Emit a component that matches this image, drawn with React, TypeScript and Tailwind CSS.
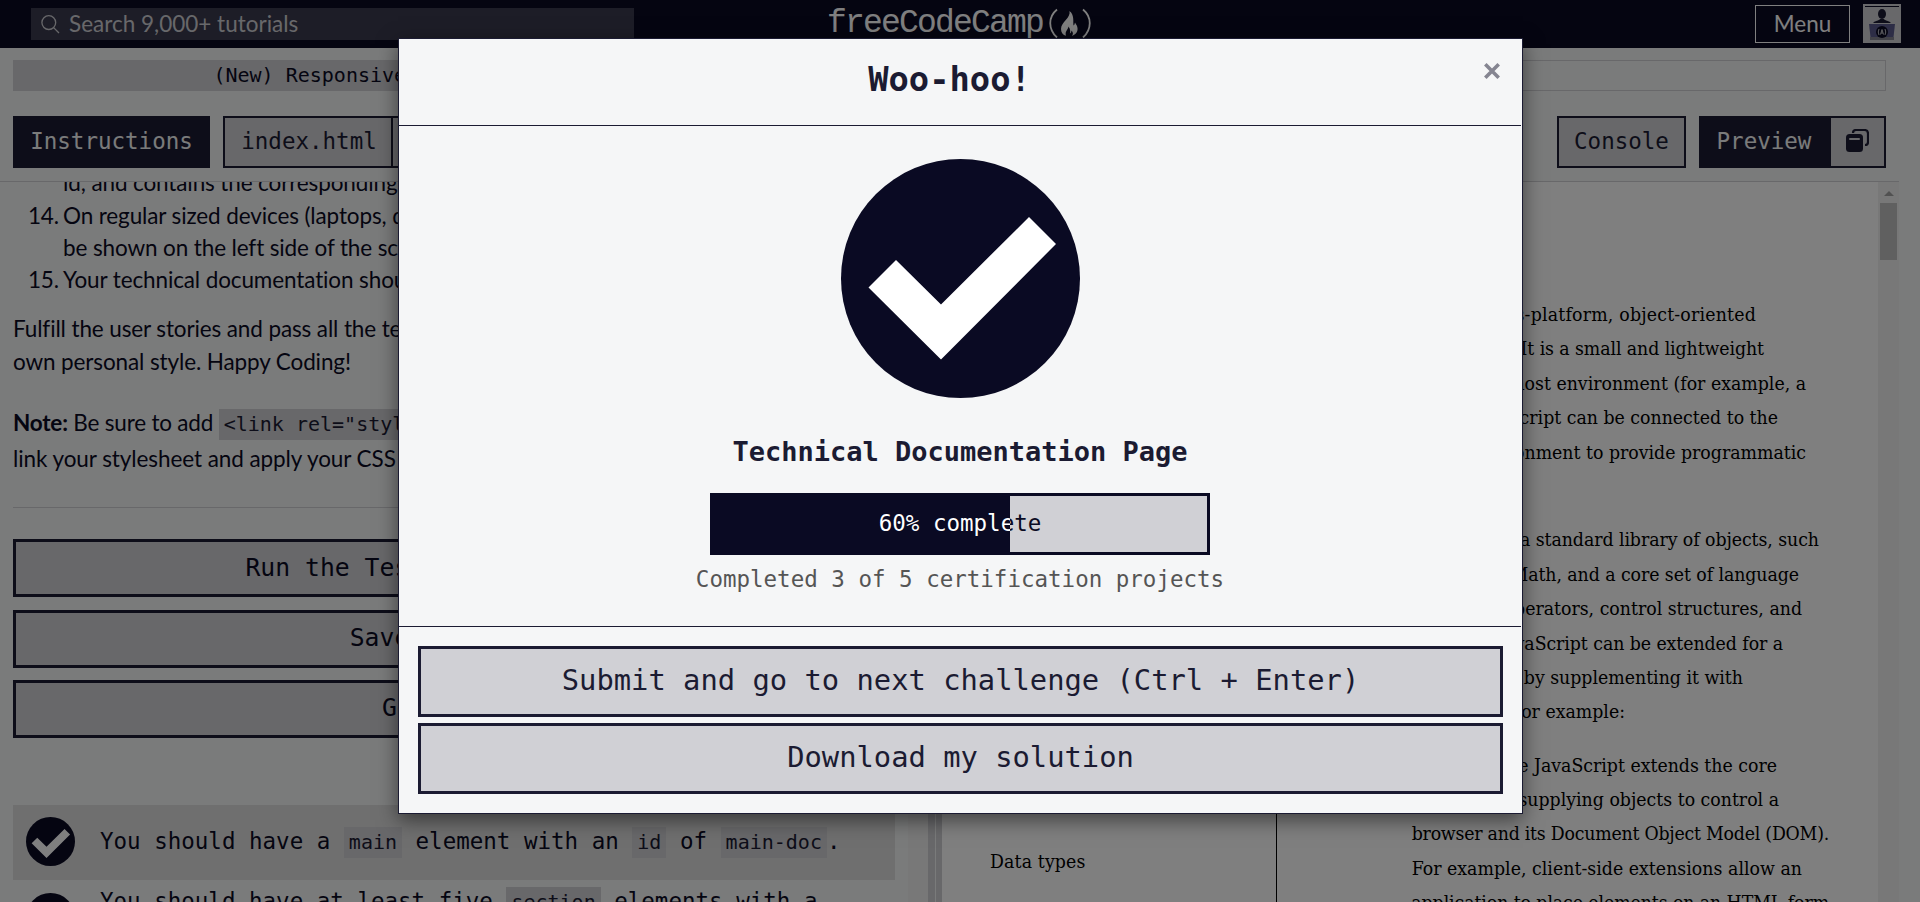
import type { ReactNode } from "react";

const MONO = "font-['DejaVu_Sans_Mono',monospace]";

function Check({ className }: { className: string }) {
  return (
    <svg viewBox="0 0 239 239" className={className}>
      <circle cx="119.5" cy="119.5" r="119.5" fill="#0a0a23" />
      <path d="M55 101 L27.5 128.5 L100 200.5 L215 85 L188 58 L100 145.5 Z" fill="#fff" />
    </svg>
  );
}

function Code({ children }: { children: ReactNode }) {
  return (
    <code className="inline-block h-[31px] bg-[#d0d0d5] px-[5px] font-['DejaVu_Sans_Mono',monospace] text-[20px] leading-[31px] tracking-normal text-[#1b1b32]">
      {children}
    </code>
  );
}

type Line = { text: string; end: number; tracking?: string };

const previewLines: Line[][] = [
  [
    { text: "JavaScript is a cross-platform, object-oriented", end: 1756, tracking: "tracking-[0.2px]" },
    { text: "scripting language. It is a small and lightweight", end: 1764, tracking: "tracking-[-0.08px]" },
    { text: "language. Inside a host environment (for example, a", end: 1806 },
    { text: "web browser), JavaScript can be connected to the", end: 1778 },
    { text: "objects of its environment to provide programmatic", end: 1806 },
    { text: "control over them.", end: 1510 },
  ],
  [
    { text: "JavaScript contains a standard library of objects, such", end: 1819, tracking: "tracking-[-0.06px]" },
    { text: "as Array, Date, and Math, and a core set of language", end: 1799, tracking: "tracking-[-0.06px]" },
    { text: "elements such as operators, control structures, and", end: 1802 },
    { text: "statements. Core JavaScript can be extended for a", end: 1783, tracking: "tracking-[-0.06px]" },
    { text: "variety of purposes by supplementing it with", end: 1743 },
    { text: "additional objects; for example:", end: 1625 },
  ],
  [
    { text: "Client-side JavaScript extends the core", end: 1777 },
    { text: "language by supplying objects to control a", end: 1779 },
    { text: "browser and its Document Object Model (DOM).", end: 1829, tracking: "tracking-[-0.22px]" },
    { text: "For example, client-side extensions allow an", end: 1802, tracking: "tracking-[0.03px]" },
    { text: "application to place elements on an HTML form", end: 1829, tracking: "tracking-[-0.08px]" },
  ],
];

function Header() {
  return (
    <header className="flex h-12 items-start bg-[#0a0a23] pl-[31px]">
      <div className="mt-2 flex h-8 w-[603px] items-center bg-[#3b3b4f] pl-[10px]">
        <svg viewBox="0 0 19 19" className="h-[19px] w-[19px]" fill="none" stroke="#d0d0d5" strokeWidth="1.3">
          <circle cx="7.8" cy="7.6" r="6.9" />
          <path d="M12.6 12.6 L18 18" />
        </svg>
        <span className="ml-[9px] text-[22.5px] leading-8 text-[#d0d0d5]">Search 9,000+ tutorials</span>
      </div>
      <div className="ml-[193px] flex items-start text-white">
        <span className="mt-[5px] w-[218px] font-['Liberation_Mono',monospace] text-[33px] leading-[38px] tracking-[-1.8px] whitespace-nowrap">
          freeCodeCamp
        </span>
        <svg viewBox="0 0 46 30" className="mt-2 ml-[3px] h-[30px] w-[46px]" fill="none" stroke="#fff" strokeWidth="1.8">
          <path d="M9 1.500 C0 9 0 21 9 29.500" />
          <path d="M35 1.500 C44 9 44 21 35 29.500" />
          <path
            d="M21.500 3 C23 10 13 14 13 21 C13 24.500 15 27 18 27.800 C16.500 23 20 22 20.500 18.500 C22.500 21 22.500 24 21.800 25.500 C23 25 23.500 23.500 23.500 22.500 C25.500 24.500 25 26.500 24 28 C28 26.500 30 23.500 29.500 20 C29.200 17 27.500 16 27 14.500 C26.500 16 26.500 17 25.500 17.500 C25 13 26.500 7 21.500 3 Z"
            fill="#fff"
            stroke="none"
          />
        </svg>
      </div>
      <div className="mt-[5px] ml-auto flex h-[38px] w-[95px] items-center justify-center border border-white text-[22.5px] text-white">
        Menu
      </div>
      <svg viewBox="0 0 38 39" className="mt-1 mr-[19px] ml-[13px] h-[39px] w-[38px]">
        <rect width="38" height="39" fill="#d0d0d5" />
        <rect x="2" y="2" width="34" height="1" fill="#0a0a23" />
        <ellipse cx="19" cy="10" rx="4" ry="5" fill="#1b1b32" />
        <path d="M10 19 C12 16.500 16 17 17 15 H21 C22 17 26 16.500 28 19 Z" fill="#1b1b32" />
        <path d="M6 20 H32 L30.500 33 H7.500 Z" fill="#5a5a8c" />
        <rect x="7" y="33" width="24" height="3" fill="#858591" />
        <circle cx="19" cy="28" r="6" fill="#0a0a23" />
        <path d="M16 25 Q14.500 28 16 31 M22 25 Q23.500 28 22 31 M17.500 30.500 L19 25.500 L20.500 30.500 M18 29 H20" fill="none" stroke="#d0d0d5" strokeWidth="0.9" />
      </svg>
    </header>
  );
}

function Toolbar() {
  return (
    <>
      <div className="mt-3 mr-[34px] ml-[13px] flex h-[31px] font-['DejaVu_Sans_Mono',monospace] text-[20px] leading-[30px] text-[#0a0a23]">
        <div className="w-[726px] bg-[#d0d0d5] text-center">(New) Responsive Web Design</div>
        <div className="flex-1 border border-[#d0d0d5]" />
      </div>
      <div className="mt-[25px] mr-[34px] ml-[13px] flex h-[52px] font-['DejaVu_Sans_Mono',monospace] text-[22.5px] text-[#1b1b32]">
        <div className="w-[197px] bg-[#1b1b32] text-center leading-[51px] text-[#f5f6f7]">Instructions</div>
        <div className="ml-[13px] w-[170px] border-2 border-[#1b1b32] bg-[#d0d0d5] pl-[2px] text-center leading-[46px]">index.html</div>
        <div className="-ml-[2px] w-[170px] border-2 border-[#1b1b32] bg-[#d0d0d5] text-center leading-[46px]">styles.css</div>
        <div className="ml-auto w-[129px] border-2 border-[#1b1b32] bg-[#d0d0d5] text-center leading-[46px]">Console</div>
        <div className="ml-[13px] w-[132px] bg-[#1b1b32] pr-[2px] text-center leading-[51px] text-[#f5f6f7]">Preview</div>
        <div className="flex w-[55px] items-center justify-center border-2 border-l-0 border-[#1b1b32] bg-[#d0d0d5] pb-[3px]">
          <svg viewBox="0 0 23 23" className="h-[23px] w-[23px]">
            <path d="M7 4 Q7 1 10 1 H18.500 Q22 1 22 4.500 V13 Q22 16 19 16" fill="none" stroke="#1b1b32" strokeWidth="2.2" />
            <rect x="0" y="5" width="17" height="18" rx="3.500" fill="#1b1b32" />
            <rect x="3" y="9" width="11" height="2" rx="1" fill="#d0d0d5" />
          </svg>
        </div>
      </div>
    </>
  );
}

function Instructions() {
  const button = "h-[58px] border-[3px] border-[#1b1b32] bg-[#d0d0d5] text-center font-['DejaVu_Sans_Mono',monospace] text-[24.75px] tracking-normal";
  return (
    <section className="w-[908px] shrink-0 overflow-hidden pr-[13px] pl-[13px] text-[22.5px] tracking-[-0.12px] whitespace-nowrap text-[#0a0a23]">
      <div className="-mt-[15px] leading-[32px]">
        <div className="h-[33px] pl-[50px]">id, and contains the corresponding text of each section.</div>
        <div className="flex"><span className="w-[50px] pr-[4px] text-right">14.</span>On regular sized devices (laptops, desktops), the navbar should</div>
        <div className="pl-[50px]">be shown on the left side of the screen.</div>
        <div className="flex"><span className="w-[50px] pr-[4px] text-right">15.</span>Your technical documentation should use at least one media query.</div>
      </div>
      <div className="mt-[16px] leading-[33px]">
        <div>Fulfill the user stories and pass all the tests below. Give it your</div>
        <div>own personal style. Happy Coding!</div>
      </div>
      <div className="mt-[27px] leading-[36px]">
        <div className="h-9 tracking-[-0.2px]"><b>Note:</b> Be sure to add <Code>{'<link rel="stylesheet" href="styles.css">'}</Code></div>
        <div className="tracking-[-0.08px]">link your stylesheet and apply your CSS</div>
      </div>
      <div className="mt-[30px] h-px bg-[#d0d0d5]" />
      <div className={`${button} mt-[31px] leading-[51px]`}>Run the Tests (Ctrl + Enter)</div>
      <div className={`${button} mt-[13px] leading-[49px]`}>Save your Code</div>
      <div className={`${button} mt-[12px] leading-[49px]`}>Get Help <span className="inline-block w-[10px]">▾</span></div>
      <div className="mt-[67px] flex h-[75px] bg-[#dfdfdf] font-['DejaVu_Sans_Mono',monospace] leading-[31px] tracking-normal">
        <Check className="mt-[12px] ml-[13px] h-[49px] w-[49px]" />
        <div className="mt-[21px] ml-[25px]">
          You should have a <Code>main</Code> element with an <Code>id</Code> of <Code>main-doc</Code>.
        </div>
      </div>
      <div className="flex h-[75px] font-['DejaVu_Sans_Mono',monospace] leading-[31px] tracking-normal">
        <Check className="mt-[13px] ml-[13px] h-[49px] w-[49px]" />
        <div className="mt-[6px] ml-[25px]">
          You should have at least five <Code>section</Code> elements with a
          <br />class of <Code>main-section</Code>.
        </div>
      </div>
    </section>
  );
}

function Preview() {
  return (
    <section className="flex min-w-0 flex-1 bg-white font-['DejaVu_Serif_Condensed','DejaVu_Serif',serif] text-[19.3px] text-black">
      <nav className="flex w-[335px] shrink-0 flex-col border-r border-black pl-[48px]">
        <div className="mt-[663px] leading-[34px] tracking-[0.15px]">Data types</div>
      </nav>
      <article className="flex min-w-0 flex-1 flex-col gap-[19px] overflow-hidden pt-[116px]">
        {previewLines.map((group, i) => (
          <div key={i}>
            {group.map((line) => (
              <div
                key={line.text}
                className={`h-[34.4px] text-right leading-[34.4px] whitespace-nowrap ${line.tracking ?? ""}`}
                style={{ width: line.end - 1277 }}
              >
                {line.text}
              </div>
            ))}
          </div>
        ))}
      </article>
      <div className="w-[21px] shrink-0 bg-[#f1f1f1] pt-[9px]">
        <svg viewBox="0 0 10 5" className="mx-auto block h-[5px] w-[10px]"><path d="M0 5 L5 0 L10 5 Z" fill="#a3a3a3" /></svg>
        <div className="mx-auto mt-[7px] h-[57px] w-[17px] bg-[#c1c1c1]" />
      </div>
    </section>
  );
}

function Modal() {
  const button = "h-[71px] border-[3px] border-[#1b1b32] bg-[#d0d0d5] text-center text-[28.8px] leading-[63px]";
  return (
    <div className={`${MONO} absolute top-[38px] left-[398px] flex h-[776px] w-[1125px] flex-col border border-[#1b1b32] bg-[#f5f6f7] text-[#1b1b32] shadow-[0_6px_19px_rgba(0,0,0,0.5)]`}>
      <div className="mr-px flex h-[87px] border-b border-[#1b1b32] pt-[21px] pr-[21px]">
        <h1 className="flex-1 pl-[16px] text-center text-[33.75px] leading-10 font-bold">Woo-hoo!</h1>
        <svg viewBox="0 0 16 16" className="mt-[3px] h-4 w-4" stroke="#858591" strokeWidth="3.600">
          <path d="M1.300 1.300 L14.700 14.700 M14.700 1.300 L1.300 14.700" />
        </svg>
      </div>
      <div className="flex flex-1 flex-col items-center pr-px">
        <Check className="mt-[33px] h-[239px] w-[239px]" />
        <h2 className="mt-[34px] text-[27px] leading-10 font-bold">Technical Documentation Page</h2>
        <div className="relative mt-[21px] h-[62px] w-[500px] border-[3px] border-[#0a0a23] bg-[#d0d0d5] text-[22.5px] leading-[55px] text-[#0a0a23]">
          <div className="text-center">60% complete</div>
          <div className="absolute top-0 left-0 h-full w-[297px] overflow-hidden bg-[#0a0a23] text-white">
            <div className="w-[494px] text-center">60% complete</div>
          </div>
        </div>
        <p className="mt-2 text-[22.5px] leading-8 text-[#555]">Completed 3 of 5 certification projects</p>
      </div>
      <div className="mr-px flex flex-col gap-[6px] border-t border-[#1b1b32] py-[19px] pr-[18px] pl-[19px]">
        <div className={button}>Submit and go to next challenge (Ctrl + Enter)</div>
        <div className={button}>Download my solution</div>
      </div>
    </div>
  );
}

export default function App() {
  return (
    <div className="relative flex h-[902px] w-[1920px] flex-col overflow-hidden bg-[#f5f6f7] font-['Lato',sans-serif]">
      <Header />
      <Toolbar />
      <main className="mt-[13px] mr-[21px] flex h-[721px] overflow-hidden border-t border-[#d0d0d5]">
        <Instructions />
        <div className="w-[20px] shrink-0 bg-[#f1f1f1]" />
        <div className="flex w-[14px] shrink-0 gap-px bg-[#f5f6f7]">
          <div className="w-[7px] bg-[#d0d0d5]" />
          <div className="w-[6px] bg-[#d0d0d5]" />
        </div>
        <Preview />
      </main>
      <div className="absolute inset-0 bg-black/50" />
      <Modal />
    </div>
  );
}
